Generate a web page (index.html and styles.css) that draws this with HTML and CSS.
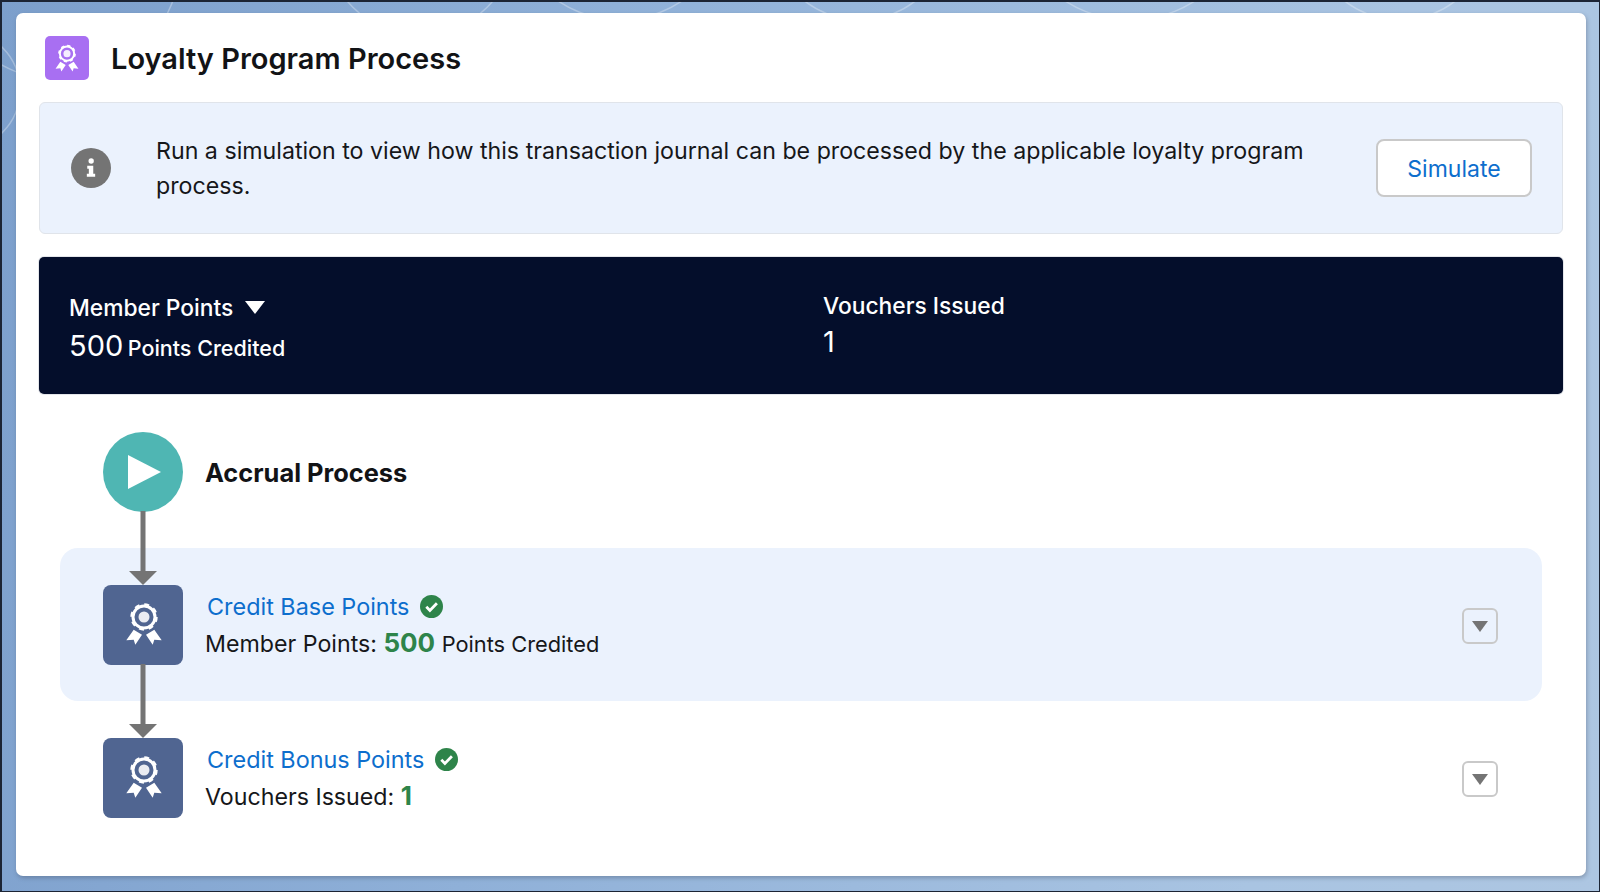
FILE: index.html
```html
<!DOCTYPE html>
<html lang="en">
<head>
<meta charset="utf-8">
<title>Loyalty Program Process</title>
<link rel="stylesheet" href="styles.css">
</head>
<body>
<svg class="defs" width="0" height="0" aria-hidden="true">
  <symbol id="reward" viewBox="-20 -18 40 51">
    <circle r="11" fill="none" stroke="#fff" stroke-width="3"/>
    <circle r="12.5" fill="none" stroke="#fff" stroke-width="2.4" stroke-dasharray="4.9 4.9"/>
    <circle r="5.5" fill="#fff" fill-opacity=".88"/>
    <polygon points="-10.3,12.7 -2,17.7 -8.7,27.7 -10.3,22.7 -17.7,23.3" fill="#fff"/>
    <polygon points="10.3,12.7 2,17.7 8.7,27.7 10.3,22.7 17.7,23.3" fill="#fff"/>
  </symbol>
  <symbol id="connector" viewBox="0 0 28 74">
    <rect x="11.5" y="0" width="5" height="62" fill="#747474"/>
    <polygon points="0,60 28,60 14,74" fill="#747474"/>
  </symbol>
  <symbol id="check" viewBox="0 0 23 23">
    <circle cx="11.5" cy="11.5" r="11.5" fill="#2e844a"/>
    <path d="M6.3 11.8l3.6 3.6 7-7.2" fill="none" stroke="#fff" stroke-width="2.8"/>
  </symbol>
</svg>
<div class="frame">
  <svg class="arcs" viewBox="0 0 1600 892" aria-hidden="true">
    <g fill="none" stroke="#fff" stroke-opacity=".3" stroke-width="1.5">
      <circle cx="420" cy="-60" r="95"/>
      <circle cx="620" cy="-90" r="110"/>
      <circle cx="860" cy="-70" r="90"/>
      <circle cx="1130" cy="-100" r="120"/>
      <circle cx="1400" cy="-70" r="90"/>
      <circle cx="60" cy="-40" r="120"/>
      <circle cx="-40" cy="90" r="60"/>
    </g>
  </svg>
  <main class="card">
    <header class="header">
      <span class="header-icon"><svg class="header-reward"><use href="#reward"/></svg></span>
      <h1 class="title">Loyalty Program Process</h1>
    </header>

    <section class="banner">
      <span class="info-icon">
        <svg class="info-glyph" viewBox="0 0 12 24"><circle cx="6.2" cy="3.6" r="3.2" fill="#fff"/><path d="M1.5 9.2h7.2v9.6h2.3v3.7H1v-3.7h2.4v-5.9H1.5z" fill="#fff"/></svg>
      </span>
      <p class="banner-text">Run a simulation to view how this transaction journal can be processed by the applicable loyalty program process.</p>
      <button class="simulate">Simulate</button>
    </section>

    <section class="summary">
      <div class="metric metric-points">
        <div class="metric-label">Member Points <span class="caret"></span></div>
        <div class="metric-value"><span class="metric-number">500</span> <span class="metric-unit">Points Credited</span></div>
      </div>
      <div class="metric metric-vouchers">
        <div class="metric-label">Vouchers Issued</div>
        <div class="metric-value metric-value-tight"><span class="metric-number">1</span></div>
      </div>
    </section>

    <section class="process">
      <div class="start">
        <span class="play"><span class="play-tri"></span></span>
        <h2 class="start-title">Accrual Process</h2>
      </div>

      <div class="step step-active">
        <svg class="connector"><use href="#connector"/></svg>
        <span class="step-icon"><svg class="step-reward"><use href="#reward"/></svg></span>
        <div class="step-body">
          <div class="step-title"><a class="step-link" href="#">Credit Base Points</a><svg class="check"><use href="#check"/></svg></div>
          <div class="step-detail">Member Points: <strong class="amount">500</strong> <span class="unit">Points Credited</span></div>
        </div>
        <button class="toggle" aria-label="Expand"><span class="toggle-tri"></span></button>
      </div>

      <div class="step">
        <svg class="connector"><use href="#connector"/></svg>
        <span class="step-icon"><svg class="step-reward"><use href="#reward"/></svg></span>
        <div class="step-body">
          <div class="step-title"><a class="step-link" href="#">Credit Bonus Points</a><svg class="check"><use href="#check"/></svg></div>
          <div class="step-detail">Vouchers Issued: <strong class="amount">1</strong></div>
        </div>
        <button class="toggle" aria-label="Expand"><span class="toggle-tri"></span></button>
      </div>
    </section>
  </main>
</div>
</body>
</html>
```

FILE: styles.css
```css
* { box-sizing: border-box; }
html, body { margin: 0; padding: 0; }
body { font-family: Inter, "Noto Sans", sans-serif; color: #16171a; overflow: hidden; }
.defs { position: absolute; }

.frame {
  position: relative;
  width: 1600px;
  height: 892px;
  padding: 11px 13px 15px 14px;
  border-style: solid;
  border-color: #1c2434;
  border-width: 2px 1px 1px 2px;
  background: linear-gradient(100deg, #7c9fcc 0%, #8fb0d8 35%, #a9c4e2 80%, #adc6e2 100%);
  overflow: hidden;
}
.arcs { position: absolute; top: -2px; left: -2px; width: 1600px; height: 892px; }

.card {
  position: relative;
  height: 863px;
  background: #fff;
  border-radius: 7px;
  box-shadow: 1px 2px 4px rgba(60, 70, 90, .35);
  padding-top: 23px;
}

.header { display: flex; align-items: center; gap: 22px; margin: 0 0 22px 29px; height: 44px; }
.header-icon {
  display: flex; align-items: center; justify-content: center;
  width: 44px; height: 44px; border-radius: 5px; background: #a86ff2;
}
.header-reward { width: 26px; height: 33px; }
.title { margin: 0; padding-top: 2px; font-size: 29px; font-weight: 600; line-height: 44px; color: #121316; }

.banner {
  display: flex; align-items: center;
  height: 132px;
  margin: 0 23px;
  padding: 0 30px 0 31px;
  background: #ebf2fd;
  border: 1px solid #e0e4ea;
  border-radius: 6px;
}
.info-icon {
  flex: none; display: flex; align-items: center; justify-content: center;
  width: 40px; height: 40px; border-radius: 50%; background: #747474;
}
.info-glyph { width: 10px; height: 20px; }
.banner-text {
  flex: 1; margin: 0 0 0 45px; padding: 2px 40px 0 0;
  font-size: 23.2px; line-height: 35.5px; color: #16171a;
}
.simulate {
  flex: none; width: 156px; height: 58px; padding-top: 2px;
  font: 400 23px Inter, sans-serif; color: #0d6ecd;
  background: #fff; border: 2px solid #c9c9c9; border-radius: 8px;
}

.summary {
  display: flex; align-items: center;
  height: 137px;
  margin: 23px 23px 0;
  padding-left: 30px;
  background: #040e2b;
  border-radius: 5px;
  box-shadow: 0 0 0 1px #e4e6ea;
  color: #fff;
}
.metric-points { width: 754px; padding-top: 8px; }
.metric-vouchers { padding-top: 1px; }
.metric-label { font-size: 22.8px; line-height: 36px; font-weight: 500; }
.caret {
  display: inline-block; margin: 0 0 2px 6px;
  border-left: 10px solid transparent; border-right: 10px solid transparent; border-top: 13px solid #fff;
}
.metric-value { line-height: 40px; }
.metric-value-tight { line-height: 36px; }
.metric-number { font-size: 29px; }
.metric-unit { font-size: 21.5px; font-weight: 500; }

.process { margin-top: 38px; }
.start { display: flex; align-items: center; gap: 22px; height: 80px; margin-left: 87px; margin-bottom: 36px; }
.play {
  flex: none; display: flex; align-items: center; justify-content: center;
  width: 80px; height: 80px; border-radius: 50%; background: #4fb6b3;
}
.play-tri {
  margin-left: 2px;
  border-top: 17px solid transparent; border-bottom: 17px solid transparent; border-left: 33px solid #fff;
}
.start-title { margin: 0; font-size: 25.4px; font-weight: 700; color: #121316; }

.step {
  position: relative;
  display: flex; align-items: center;
  margin: 0 44px;
  padding: 37px 44px 37px 43px;
  height: 153px;
  border-radius: 18px;
}
.step-active { background: #ebf2fd; }
.connector { position: absolute; left: 69px; top: -37px; width: 28px; height: 74px; }
.step-icon {
  position: relative;
  flex: none; display: flex; align-items: center; justify-content: center;
  width: 80px; height: 80px; border-radius: 8px; background: #506591;
}
.step-reward { width: 40px; height: 51px; margin-left: 1px; }
.step-body { flex: 1; margin-left: 22px; }
.step-title { display: flex; align-items: center; height: 37px; padding-top: 2px; }
.step-link { margin-left: 2px; font-size: 23.4px; color: #0d6ecd; text-decoration: none; }
.check { width: 23px; height: 23px; margin-left: 11px; }
.step-detail { font-size: 23.2px; line-height: 38px; color: #16171a; }
.amount { font-size: 26px; font-weight: 700; color: #2e844a; }
.unit { font-size: 21.8px; }
.toggle {
  flex: none; display: flex; align-items: center; justify-content: center;
  width: 36px; height: 36px; padding: 0; margin-top: 2px;
  background: transparent; border: 2px solid #c9c9c9; border-radius: 6px;
}
.toggle-tri {
  border-left: 8px solid transparent; border-right: 8px solid transparent; border-top: 11px solid #747474;
  margin-top: 2px;
}
```
